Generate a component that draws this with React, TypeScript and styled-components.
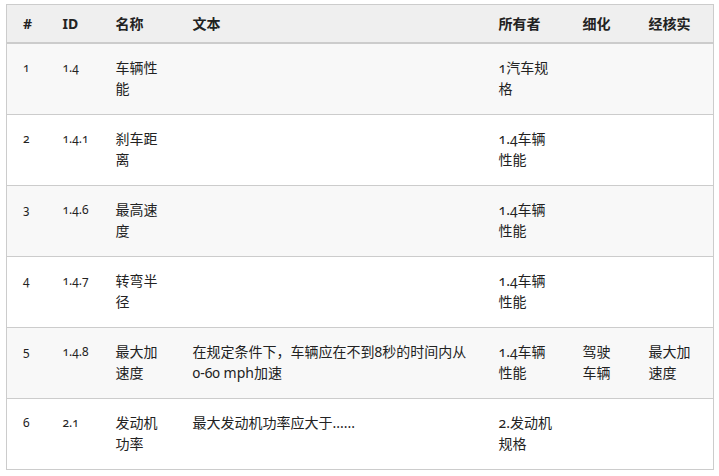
import React from "react";
import styled, { createGlobalStyle } from "styled-components";

const Global = createGlobalStyle`
  html, body { margin: 0; padding: 0; background: #ffffff; }
  body {
    font-family: "Noto Sans", "Noto Sans CJK SC", sans-serif;
    color: #222222;
  }
`;

const Page = styled.div`
  padding: 4px 6px;
`;

const Table = styled.table`
  width: 708px;
  table-layout: fixed;
  border-collapse: collapse;
  border: 1px solid #cccccc;
  font-size: 14px;
  line-height: 21px;
  font-variant-numeric: oldstyle-nums;
`;

const HeadRow = styled.tr`
  background: #efefef;
  border-bottom: 2px solid #cccccc;
`;

const HeadCell = styled.th`
  padding: 8px 12px 8px 16px;
  text-align: left;
  font-weight: 700;
  font-size: 14px;
  vertical-align: top;
`;

const Row = styled.tr<{ $odd: boolean }>`
  background: ${(p) => (p.$odd ? "#f8f8f8" : "#ffffff")};
  border-top: 1px solid #cccccc;
`;

const Cell = styled.td<{ $small?: boolean }>`
  padding: 13px 12px 15px 16px;
  vertical-align: top;
  font-size: ${(p) => (p.$small ? "12px" : "14px")};
`;

const cols: (number | undefined)[] = [40, 53, 77, 306, 84, 66, undefined];
const heads = ["#", "ID", "名称", "文本", "所有者", "细化", "经核实"];

type RowData = {
  n: string;
  id: string;
  name: string;
  text: string;
  owner: string;
  refine: string;
  verified: string;
};

const rows: RowData[] = [
  { n: "1", id: "1.4", name: "车辆性能", text: "", owner: "1汽车规格", refine: "", verified: "" },
  { n: "2", id: "1.4.1", name: "刹车距离", text: "", owner: "1.4车辆性能", refine: "", verified: "" },
  { n: "3", id: "1.4.6", name: "最高速度", text: "", owner: "1.4车辆性能", refine: "", verified: "" },
  { n: "4", id: "1.4.7", name: "转弯半径", text: "", owner: "1.4车辆性能", refine: "", verified: "" },
  {
    n: "5",
    id: "1.4.8",
    name: "最大加速度",
    text: "在规定条件下，车辆应在不到8秒的时间内从0-60 mph加速",
    owner: "1.4车辆性能",
    refine: "驾驶车辆",
    verified: "最大加速度",
  },
  { n: "6", id: "2.1", name: "发动机功率", text: "最大发动机功率应大于......", owner: "2.发动机规格", refine: "", verified: "" },
];

export default function App() {
  return (
    <Page>
      <Global />
      <Table>
        <colgroup>
          {cols.map((w, i) => (
            <col key={i} style={w ? { width: w } : undefined} />
          ))}
        </colgroup>
        <thead>
          <HeadRow>
            {heads.map((h) => (
              <HeadCell key={h}>{h}</HeadCell>
            ))}
          </HeadRow>
        </thead>
        <tbody>
          {rows.map((r, i) => (
            <Row key={r.n} $odd={i % 2 === 0}>
              <Cell $small>{r.n}</Cell>
              <Cell $small>{r.id}</Cell>
              <Cell>{r.name}</Cell>
              <Cell>{r.text}</Cell>
              <Cell>{r.owner}</Cell>
              <Cell>{r.refine}</Cell>
              <Cell>{r.verified}</Cell>
            </Row>
          ))}
        </tbody>
      </Table>
    </Page>
  );
}
